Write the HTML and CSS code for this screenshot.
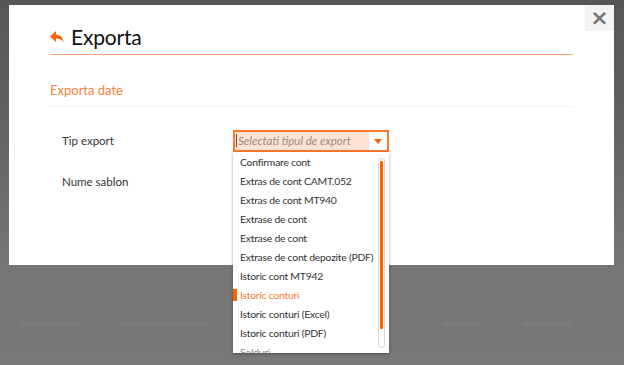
FILE: index.html
```html
<!DOCTYPE html>
<html lang="ro">
<head>
    <meta charset="UTF-8">
    <title>Exporta</title>
    <link rel="stylesheet" href="styles.css">
</head>
<body>
    <div class="backdrop">
        <div class="page-behind">
            <span class="ghost w60"></span>
            <span class="ghost w90"></span>
            <span class="sep"></span>
            <span class="ghost w70"></span>
            <span class="sep"></span>
            <span class="ghost w40"></span>
            <span class="ghost w50"></span>
        </div>

        <div class="modal">
            <a href="#" class="close-btn">&times;</a>

            <div class="modal-header">
                <svg class="back-icon" viewBox="0 0 14 12" width="14" height="12">
                    <path d="M6 0 L0 5.5 L6 11 L6 7.6 C9.5 7.4 12 8.6 13.6 11.6 C13.2 6.6 10.4 3.6 6 3.4 Z" fill="#ff6200"/>
                </svg>
                <h1>Exporta</h1>
            </div>

            <h2 class="section-title">Exporta date</h2>

            <div class="form">
                <div class="form-row">
                    <label>Tip export</label>
                    <div class="select-wrap">
                        <div class="select open">
                            <span class="placeholder">Selectati tipul de export</span>
                            <span class="select-arrow"></span>
                        </div>
                        <ul class="dropdown">
                            <li>Confirmare cont</li>
                            <li>Extras de cont CAMT.052</li>
                            <li>Extras de cont MT940</li>
                            <li>Extrase de cont</li>
                            <li>Extrase de cont</li>
                            <li>Extrase de cont depozite (PDF)</li>
                            <li>Istoric cont MT942</li>
                            <li class="active">Istoric conturi</li>
                            <li>Istoric conturi (Excel)</li>
                            <li>Istoric conturi (PDF)</li>
                            <li class="cut">Solduri</li>
                            <div class="scrollbar"><div class="thumb"></div></div>
                        </ul>
                    </div>
                </div>
                <div class="form-row">
                    <label>Nume sablon</label>
                    <div class="input"></div>
                </div>
            </div>
        </div>
    </div>
</body>
</html>
```

FILE: styles.css
```css
body { margin: 0; font-family: Lato, "Noto Sans", sans-serif; color: #333; }
.backdrop { width: 624px; height: 365px; overflow: hidden; position: relative; background: linear-gradient(#565656 0, #626262 120px, #767676 270px, #787878 100%); padding-top: 5px; box-sizing: border-box; }

.page-behind { position: absolute; left: 0; right: 0; top: 312px; height: 24px; display: flex; align-items: center; gap: 40px; padding-left: 20px; }
.ghost { height: 5px; background: #7b7b7b; border-radius: 2px; }
.w40 { width: 40px; } .w50 { width: 50px; } .w60 { width: 60px; } .w70 { width: 70px; } .w90 { width: 90px; }
.sep { width: 1px; height: 22px; background: #7b7b7b; }

.modal { position: relative; margin-left: 9px; width: 605px; height: 260px; background: #fff; padding: 0 41px; box-sizing: border-box; }
.close-btn { position: absolute; top: 0; right: 0; width: 29px; height: 26px; background: #f3f3f3; color: #777; text-decoration: none; font-family: "DejaVu Sans", sans-serif; font-weight: bold; font-size: 22px; line-height: 25px; text-align: center; }

.modal-header { display: flex; align-items: center; height: 50px; border-bottom: 1px solid #f9a271; box-sizing: border-box; padding-top: 14px; }
.back-icon { margin-right: 7px; margin-top: 1px; }
.modal-header h1 { margin: 0; font-size: 21px; font-weight: 400; color: #111; letter-spacing: -0.2px; }

.section-title { margin: 0; height: 52px; padding-top: 26px; line-height: 18px; font-size: 13px; font-weight: 400; color: #fb7f3b; border-bottom: 1px solid #f1f1f1; box-sizing: border-box; }

.form { padding: 13px 0 0 12px; }
.form-row { display: flex; align-items: center; height: 41px; }
.form-row label { width: 171px; font-size: 11.5px; color: #333; }

.select-wrap { position: relative; }
.select { width: 156px; height: 22px; box-sizing: border-box; border: 2px solid #ff7a2f; background: #fde3d3; display: flex; align-items: center; }
.placeholder { flex: 1; font-size: 11.5px; font-style: italic; color: #9a8c84; border-left: 1px solid #555; margin-left: 1px; padding-left: 1px; line-height: 13px; white-space: nowrap; overflow: hidden; }
.select-arrow { width: 18px; height: 18px; background: #fff; position: relative; }
.select-arrow::after { content: ""; position: absolute; left: 5px; top: 7px; border-left: 4px solid transparent; border-right: 4px solid transparent; border-top: 5px solid #ff6200; }

.dropdown { position: absolute; top: 22px; left: 0; width: 156px; height: 201px; margin: 0; padding: 1px 0 0; list-style: none; background: #fff; box-shadow: 0 1px 3px rgba(0,0,0,0.35); overflow: hidden; box-sizing: border-box; z-index: 5; }
.dropdown li { height: 19.1px; line-height: 19px; padding-left: 7px; font-size: 10.4px; letter-spacing: -0.25px; color: #333; white-space: nowrap; position: relative; }
.dropdown li.active { color: #ff7a30; }
.dropdown li.active::before { content: ""; position: absolute; left: 0; top: 3px; width: 4px; height: 12px; background: #ff6200; }
.dropdown li.cut { line-height: 12px; height: 9px; overflow: hidden; padding-top: 3px; color: #888; }
.scrollbar { position: absolute; right: 4px; top: 6px; width: 5px; height: 188px; border: 1px solid #d8d8d8; border-radius: 3px; background: #fff; }
.thumb { margin: 2px 1px 0; height: 168px; background: #ff6200; border-radius: 1px; }

.input { width: 156px; height: 22px; border: 1px solid #ccc; box-sizing: border-box; }
```
